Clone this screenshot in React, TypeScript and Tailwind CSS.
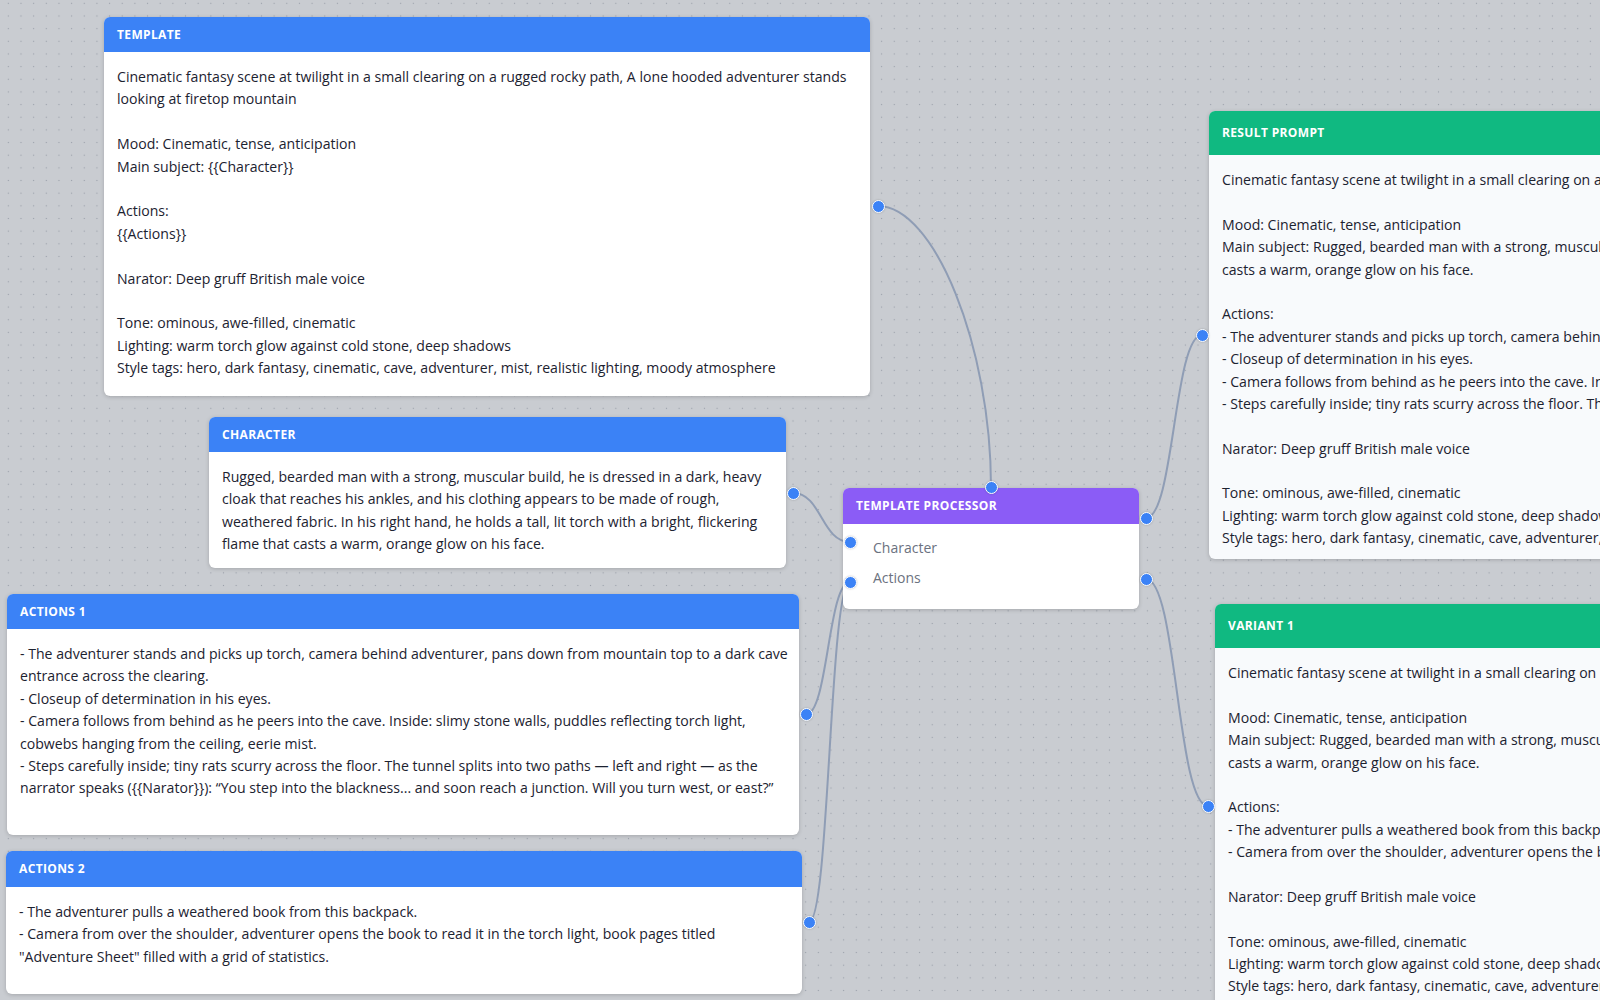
import React from 'react';

type NodeProps = {
  x: number;
  y: number;
  w: number;
  h: number;
  title: string;
  header: string;
  headerH: string;
  body: string;
  lines: string[];
};

const FlowNode = ({ x, y, w, h, title, header, headerH, body, lines }: NodeProps) => (
  <div
    className={`absolute rounded-[6px] overflow-hidden shadow-[0_1px_4px_rgba(0,0,0,0.18)] ${body}`}
    style={{ left: x, top: y, width: w, height: h }}
  >
    <div className={`${header} ${headerH} flex items-center px-[13px] text-white text-[12px] font-bold tracking-[0.03em] uppercase`}>
      {title}
    </div>
    <div className="px-[13px] pt-[14px] text-[14.1px] leading-[22.4px] text-[#1c2230] whitespace-pre">
      {lines.map((l, i) => (
        <div key={i} className="h-[22.4px]">{l}</div>
      ))}
    </div>
  </div>
);

const Handle = ({ x, y }: { x: number; y: number }) => (
  <div
    className="absolute w-[13px] h-[13px] rounded-full bg-[#3b82f6] border-[1.5px] border-white shadow-[0_0_2px_rgba(0,0,0,0.25)]"
    style={{ left: x - 6.5, top: y - 6.5 }}
  />
);

const templateLines = [
  'Cinematic fantasy scene at twilight in a small clearing on a rugged rocky path, A lone hooded adventurer stands',
  'looking at firetop mountain',
  '',
  'Mood: Cinematic, tense, anticipation',
  'Main subject: {{Character}}',
  '',
  'Actions:',
  '{{Actions}}',
  '',
  'Narator: Deep gruff British male voice',
  '',
  'Tone: ominous, awe-filled, cinematic',
  'Lighting: warm torch glow against cold stone, deep shadows',
  'Style tags: hero, dark fantasy, cinematic, cave, adventurer, mist, realistic lighting, moody atmosphere',
];

const characterLines = [
  'Rugged, bearded man with a strong, muscular build, he is dressed in a dark, heavy',
  'cloak that reaches his ankles, and his clothing appears to be made of rough,',
  'weathered fabric. In his right hand, he holds a tall, lit torch with a bright, flickering',
  'flame that casts a warm, orange glow on his face.',
];

const actions1Lines = [
  '- The adventurer stands and picks up torch, camera behind adventurer, pans down from mountain top to a dark cave',
  'entrance across the clearing.',
  '- Closeup of determination in his eyes.',
  '- Camera follows from behind as he peers into the cave. Inside: slimy stone walls, puddles reflecting torch light,',
  'cobwebs hanging from the ceiling, eerie mist.',
  '- Steps carefully inside; tiny rats scurry across the floor. The tunnel splits into two paths \u2014 left and right \u2014 as the',
  'narrator speaks ({{Narator}}): \u201cYou step into the blackness... and soon reach a junction. Will you turn west, or east?\u201d',
];

const actions2Lines = [
  '- The adventurer pulls a weathered book from this backpack.',
  '- Camera from over the shoulder, adventurer opens the book to read it in the torch light, book pages titled',
  '"Adventure Sheet" filled with a grid of statistics.',
];

const mainSubject = [
  'Main subject: Rugged, bearded man with a strong, muscular build, he is dressed in a dark, heavy cloak that reaches his ankles, and his clothing appears to be made of rough, weathered fabric. In his right hand, he holds a tall, lit torch with a bright, flickering flame that',
  'casts a warm, orange glow on his face.',
];

const tail = [
  '',
  'Narator: Deep gruff British male voice',
  '',
  'Tone: ominous, awe-filled, cinematic',
  'Lighting: warm torch glow against cold stone, deep shadows',
  'Style tags: hero, dark fantasy, cinematic, cave, adventurer, mist, realistic lighting, moody atmosphere',
];

const resultLines = [
  'Cinematic fantasy scene at twilight in a small clearing on a rugged rocky path, A lone hooded adventurer stands looking at firetop mountain',
  '',
  'Mood: Cinematic, tense, anticipation',
  ...mainSubject,
  '',
  'Actions:',
  '- The adventurer stands and picks up torch, camera behind adventurer, pans down from mountain top to a dark cave entrance across the clearing.',
  '- Closeup of determination in his eyes.',
  '- Camera follows from behind as he peers into the cave. Inside: slimy stone walls, puddles reflecting torch light, cobwebs hanging from the ceiling, eerie mist.',
  '- Steps carefully inside; tiny rats scurry across the floor. The tunnel splits into two paths \u2014 left and right \u2014 as the narrator speaks.',
  ...tail,
];

const variantLines = [
  'Cinematic fantasy scene at twilight in a small clearing on a rugged rocky path, A lone hooded adventurer stands looking at firetop mountain',
  '',
  'Mood: Cinematic, tense, anticipation',
  ...mainSubject,
  '',
  'Actions:',
  '- The adventurer pulls a weathered book from this backpack.',
  '- Camera from over the shoulder, adventurer opens the book to read it in the torch light, book pages titled "Adventure Sheet" filled with a grid of statistics.',
  ...tail,
];

const edges = [
  'M878,206 C934.5,206 991,346.5 991,487',
  'M793,493 C821.5,493 821.5,542 850,542',
  'M806,714.5 C828,714.5 828,582 850,582',
  'M809,922 C829.5,922 829.5,582 850,582',
  'M1146,518 C1174,518 1174,335 1202,335',
  'M1146,579 C1177,579 1177,806 1208,806',
];

export default function App() {
  return (
    <div className="relative w-[1600px] h-[1000px] overflow-hidden bg-[#c9ccd1] bg-[radial-gradient(circle,#9aa0aa_0.7px,transparent_1px)] bg-[size:12.67px_12.67px] bg-[position:2px_-3px] font-['Segoe_UI','Open_Sans',sans-serif]">
      <svg className="absolute inset-0" width={1600} height={1000}>
        {edges.map((d, i) => (
          <path key={i} d={d} fill="none" stroke="#8f9db5" strokeWidth={2} />
        ))}
      </svg>

      <FlowNode x={104} y={17} w={766} h={379} title="Template" header="bg-[#3b82f6]" headerH="h-[35px]" body="bg-white" lines={templateLines} />
      <FlowNode x={209} y={417} w={577} h={151} title="Character" header="bg-[#3b82f6]" headerH="h-[35px]" body="bg-white" lines={characterLines} />
      <FlowNode x={7} y={594} w={792} h={241} title="Actions 1" header="bg-[#3b82f6]" headerH="h-[35px]" body="bg-white" lines={actions1Lines} />
      <FlowNode x={6} y={851} w={796} h={143} title="Actions 2" header="bg-[#3b82f6]" headerH="h-[36px]" body="bg-white" lines={actions2Lines} />
      <FlowNode x={1209} y={111} w={1000} h={448} title="Result Prompt" header="bg-[#10b981]" headerH="h-[44px]" body="bg-[#f8fafc]" lines={resultLines} />
      <FlowNode x={1215} y={604} w={1000} h={500} title="Variant 1" header="bg-[#10b981]" headerH="h-[44px]" body="bg-[#f8fafc]" lines={variantLines} />

      <div
        className="absolute rounded-[6px] overflow-hidden bg-white shadow-[0_1px_4px_rgba(0,0,0,0.18)]"
        style={{ left: 843, top: 488, width: 296, height: 121 }}
      >
        <div className="bg-[#8b5cf6] h-[36px] flex items-center px-[13px] text-white text-[12px] font-bold tracking-[0.03em] uppercase">
          Template Processor
        </div>
        <div className="pt-[8px] pl-[30px] text-[14px] text-[#6b7280]">
          <div className="h-[30px] flex items-center">Character</div>
          <div className="h-[30px] flex items-center">Actions</div>
        </div>
      </div>

      <Handle x={878} y={206} />
      <Handle x={793} y={493} />
      <Handle x={806} y={714.5} />
      <Handle x={809} y={922} />
      <Handle x={991} y={487} />
      <Handle x={850} y={542} />
      <Handle x={850} y={582} />
      <Handle x={1146} y={518} />
      <Handle x={1146} y={579} />
      <Handle x={1202} y={335} />
      <Handle x={1208} y={806} />
    </div>
  );
}
